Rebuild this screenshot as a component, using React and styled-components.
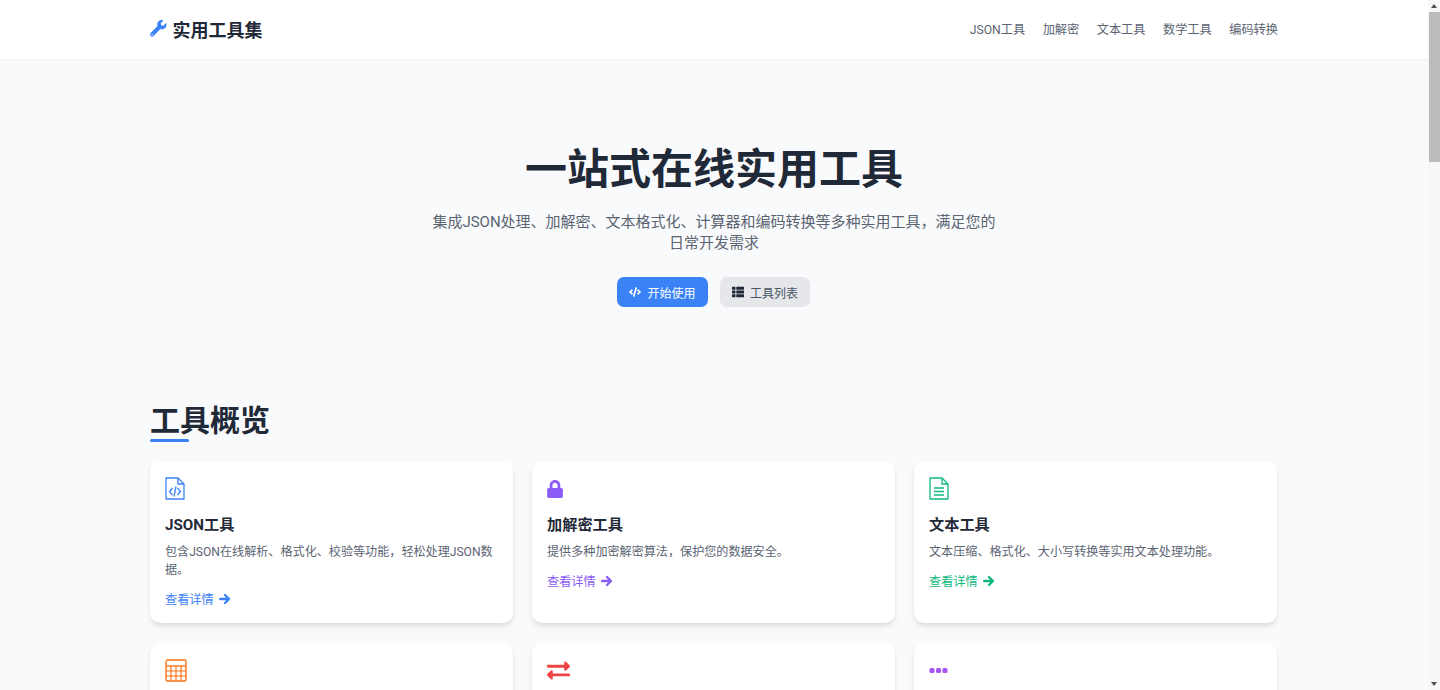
import styled, { createGlobalStyle } from "styled-components";
import { FaWrench, FaCode, FaThList, FaLock, FaExchangeAlt } from "react-icons/fa";

const GlobalStyle = createGlobalStyle`
  html, body {
    margin: 0;
    padding: 0;
    background: #f9fafb;
    font-family: Roboto, "Noto Sans CJK SC", sans-serif;
    color: #1f2937;
  }
`;

const Frame = styled.div`
  display: flex;
  height: 100vh;
  overflow: hidden;
`;
const Page = styled.div`
  flex: 1;
  min-width: 0;
`;
const ScrollRail = styled.div`
  display: flex;
  flex-direction: column;
  flex: none;
  width: 12px;
  background: #f7f7f7;
`;
const ScrollArrow = styled.div`
  display: flex;
  flex: none;
  align-items: center;
  justify-content: center;
  height: 12px;
  &::before {
    content: "";
    border-left: 3px solid transparent;
    border-right: 3px solid transparent;
    border-bottom: ${({ $down }) => ($down ? "none" : "4px solid #505050")};
    border-top: ${({ $down }) => ($down ? "4px solid #505050" : "none")};
  }
`;
const ScrollThumb = styled.div`
  flex: none;
  height: 150px;
  margin-left: 1px;
  background: #bcbcbc;
`;
const ScrollSpace = styled.div`
  flex: 1;
`;
const Header = styled.header`
  height: 59px;
  background: #fff;
  border-bottom: 1px solid #f0f1f3;
`;
const HeaderInner = styled.div`
  box-sizing: border-box;
  width: 1128px;
  height: 100%;
  margin: 0 auto;
  padding-bottom: 2px;
  display: flex;
  align-items: center;
  justify-content: space-between;
`;
const Logo = styled.div`
  display: flex;
  align-items: center;
  gap: 6px;
  font-size: 18px;
  font-weight: 700;
  svg {
    color: #3b82f6;
    font-size: 16.5px;
  }
`;
const Nav = styled.nav`
  display: flex;
  gap: 17.5px;
`;
const NavLink = styled.a`
  font-size: 12.2px;
  color: #5b6472;
`;
const Hero = styled.section`
  display: flex;
  flex-direction: column;
  align-items: center;
  padding-top: 80px;
  text-align: center;
`;
const HeroTitle = styled.h1`
  margin: 0;
  font-size: 42px;
  line-height: 60px;
  font-weight: 700;
`;
const HeroText = styled.p`
  width: 570px;
  margin: 12px 0 0;
  font-size: 15px;
  line-height: 21px;
  color: #5b6472;
`;
const Actions = styled.div`
  display: flex;
  gap: 12px;
  margin: 23px 1px 0 0;
`;
const Button = styled.a`
  display: flex;
  align-items: center;
  justify-content: center;
  gap: 6px;
  width: ${({ $width }) => $width}px;
  height: 30px;
  border-radius: 7px;
  font-size: 12px;
  background: ${({ $primary }) => ($primary ? "#3b82f6" : "#e5e7eb")};
  color: ${({ $primary }) => ($primary ? "#fff" : "#4b5563")};
  svg {
    color: ${({ $primary }) => ($primary ? "#fff" : "#1f2937")};
  }
`;
const Section = styled.section`
  width: 1128px;
  margin: 0 auto;
  padding-top: 94px;
`;
const SectionTitle = styled.h2`
  position: relative;
  width: fit-content;
  margin: 0 0 20px;
  font-size: 30px;
  line-height: 40px;
  font-weight: 700;
  &::after {
    content: "";
    position: absolute;
    left: 0;
    bottom: -1px;
    width: 39px;
    height: 3px;
    border-radius: 2px;
    background: #3b82f6;
  }
`;
const Grid = styled.div`
  display: grid;
  grid-template-columns: repeat(3, 363px);
  gap: 20px 19px;
`;
const Card = styled.article`
  min-height: 132px;
  padding: 15px;
  background: #fff;
  border-radius: 10px;
  box-shadow: 0 4px 6px -1px rgba(0, 0, 0, 0.1), 0 2px 4px -1px rgba(0, 0, 0, 0.06);
`;
const CardIcon = styled.div`
  display: flex;
  align-items: center;
  height: 25px;
  margin-bottom: 14px;
  color: ${({ $color }) => $color};
`;
const CardTitle = styled.h3`
  margin: 0 0 8px;
  font-size: 15.2px;
  line-height: 20px;
  font-weight: 700;
`;
const CardText = styled.p`
  margin: 0 0 11px;
  font-size: 12.1px;
  line-height: 18px;
  color: #5b6472;
`;
const CardLink = styled.a`
  display: flex;
  align-items: center;
  gap: 5px;
  height: 18px;
  font-size: 12.2px;
  color: ${({ $color }) => $color};
`;
const LockIcon = styled(FaLock)`
  margin-left: -1px;
`;

const FileCodeIcon = () => (
  <svg width="20" height="23" viewBox="0 0 20 23" fill="none" stroke="currentColor" strokeWidth="1.3">
    <path d="M1 1h12l6 6v15H1z" strokeLinejoin="round" />
    <path d="M13 1v6h6" />
    <path d="M7.5 11l-3 3.5 3 3.5M12.5 11l3 3.5-3 3.5M11 9.5l-2 10" />
  </svg>
);

const FileTextIcon = () => (
  <svg width="20" height="23" viewBox="0 0 20 23" fill="none" stroke="currentColor" strokeWidth="1.3">
    <path d="M1 1h12l6 6v15H1z" strokeLinejoin="round" />
    <path d="M13 1v6h6" />
    <path d="M5 11h10M5 14.5h10M5 18h10" strokeWidth="1.5" />
  </svg>
);

const CalculatorIcon = () => (
  <svg width="22" height="23" viewBox="0 0 22 23" fill="none" stroke="currentColor">
    <rect x="1" y="1" width="20" height="21" rx="1.5" strokeWidth="1.4" />
    <path d="M1 7h20" strokeWidth="1.4" />
    <path d="M6 7v15M11 7v15M16 7v15M1 12h20M1 17h20" strokeWidth="1.2" />
  </svg>
);

const DotsIcon = () => (
  <svg width="19" height="7" viewBox="0 0 19 7" fill="currentColor">
    <rect x="0.5" y="1" width="5" height="5" rx="1.5" />
    <rect x="7" y="1" width="5" height="5" rx="1.5" />
    <rect x="13.5" y="1" width="5" height="5" rx="1.5" />
  </svg>
);

const ArrowIcon = () => (
  <svg width="12" height="12" viewBox="0 0 12 12" fill="none" stroke="currentColor" strokeWidth="2.4">
    <path d="M1.2 6h8.6M6 2l4 4-4 4" strokeLinecap="round" strokeLinejoin="round" />
  </svg>
);

const navItems = ["JSON工具", "加解密", "文本工具", "数学工具", "编码转换"];

const tools = [
  {
    id: "json",
    title: "JSON工具",
    text: "包含JSON在线解析、格式化、校验等功能，轻松处理JSON数据。",
    color: "#3b82f6",
    icon: <FileCodeIcon />,
  },
  {
    id: "crypto",
    title: "加解密工具",
    text: "提供多种加密解密算法，保护您的数据安全。",
    color: "#8b5cf6",
    icon: <LockIcon size={18} />,
  },
  {
    id: "text",
    title: "文本工具",
    text: "文本压缩、格式化、大小写转换等实用文本处理功能。",
    color: "#10b981",
    icon: <FileTextIcon />,
  },
  // the second row only shows its icons above the fold
  { id: "calc", color: "#f97316", icon: <CalculatorIcon /> },
  { id: "encode", color: "#ef4444", icon: <FaExchangeAlt size={23} /> },
  { id: "more", color: "#a855f7", icon: <DotsIcon /> },
];

export default function App() {
  return (
    <Frame>
      <GlobalStyle />
      <Page>
        <Header>
          <HeaderInner>
            <Logo>
              <FaWrench />
              实用工具集
            </Logo>
            <Nav>
              {navItems.map((item) => (
                <NavLink key={item}>{item}</NavLink>
              ))}
            </Nav>
          </HeaderInner>
        </Header>
        <Hero>
          <HeroTitle>一站式在线实用工具</HeroTitle>
          <HeroText>
            集成JSON处理、加解密、文本格式化、计算器和编码转换等多种实用工具，满足您的日常开发需求
          </HeroText>
          <Actions>
            <Button $primary $width={91}>
              <FaCode />
              开始使用
            </Button>
            <Button $width={90}>
              <FaThList />
              工具列表
            </Button>
          </Actions>
        </Hero>
        <Section>
          <SectionTitle>工具概览</SectionTitle>
          <Grid>
            {tools.map(({ id, title, text, color, icon }) => (
              <Card key={id}>
                <CardIcon $color={color}>{icon}</CardIcon>
                {title && (
                  <>
                    <CardTitle>{title}</CardTitle>
                    <CardText>{text}</CardText>
                    <CardLink $color={color}>
                      查看详情
                      <ArrowIcon />
                    </CardLink>
                  </>
                )}
              </Card>
            ))}
          </Grid>
        </Section>
      </Page>
      <ScrollRail>
        <ScrollArrow />
        <ScrollThumb />
        <ScrollSpace />
        <ScrollArrow $down />
      </ScrollRail>
    </Frame>
  );
}
